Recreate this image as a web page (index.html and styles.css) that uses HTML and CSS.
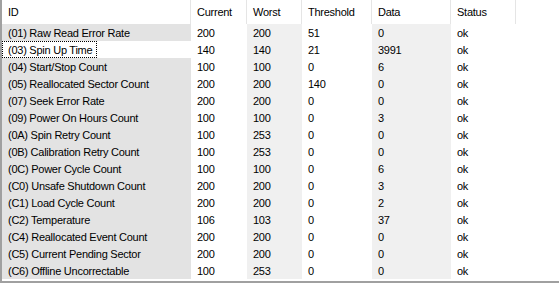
FILE: index.html
```html
<!DOCTYPE html>
<html>
<head>
<meta charset="utf-8">
<link rel="stylesheet" href="styles.css">
</head>
<body>
<div class="list">
  <div class="row head">
    <div class="c id">ID</div>
    <div class="c">Current</div>
    <div class="c">Worst</div>
    <div class="c">Threshold</div>
    <div class="c">Data</div>
    <div class="c">Status</div>
    <div class="c last"></div>
  </div>
  <div class="row"><div class="c id">(01) Raw Read Error Rate</div><div class="c">200</div><div class="c alt">200</div><div class="c">51</div><div class="c alt">0</div><div class="c">ok</div><div class="c last"></div></div>
  <div class="row sel"><div class="c id"><span class="focus">(03) Spin Up Time</span></div><div class="c">140</div><div class="c alt">140</div><div class="c">21</div><div class="c alt">3991</div><div class="c">ok</div><div class="c last"></div></div>
  <div class="row"><div class="c id">(04) Start/Stop Count</div><div class="c">100</div><div class="c alt">100</div><div class="c">0</div><div class="c alt">6</div><div class="c">ok</div><div class="c last"></div></div>
  <div class="row"><div class="c id">(05) Reallocated Sector Count</div><div class="c">200</div><div class="c alt">200</div><div class="c">140</div><div class="c alt">0</div><div class="c">ok</div><div class="c last"></div></div>
  <div class="row"><div class="c id">(07) Seek Error Rate</div><div class="c">200</div><div class="c alt">200</div><div class="c">0</div><div class="c alt">0</div><div class="c">ok</div><div class="c last"></div></div>
  <div class="row"><div class="c id">(09) Power On Hours Count</div><div class="c">100</div><div class="c alt">100</div><div class="c">0</div><div class="c alt">3</div><div class="c">ok</div><div class="c last"></div></div>
  <div class="row"><div class="c id">(0A) Spin Retry Count</div><div class="c">100</div><div class="c alt">253</div><div class="c">0</div><div class="c alt">0</div><div class="c">ok</div><div class="c last"></div></div>
  <div class="row"><div class="c id">(0B) Calibration Retry Count</div><div class="c">100</div><div class="c alt">253</div><div class="c">0</div><div class="c alt">0</div><div class="c">ok</div><div class="c last"></div></div>
  <div class="row"><div class="c id">(0C) Power Cycle Count</div><div class="c">100</div><div class="c alt">100</div><div class="c">0</div><div class="c alt">6</div><div class="c">ok</div><div class="c last"></div></div>
  <div class="row"><div class="c id">(C0) Unsafe Shutdown Count</div><div class="c">200</div><div class="c alt">200</div><div class="c">0</div><div class="c alt">3</div><div class="c">ok</div><div class="c last"></div></div>
  <div class="row"><div class="c id">(C1) Load Cycle Count</div><div class="c">200</div><div class="c alt">200</div><div class="c">0</div><div class="c alt">2</div><div class="c">ok</div><div class="c last"></div></div>
  <div class="row"><div class="c id">(C2) Temperature</div><div class="c">106</div><div class="c alt">103</div><div class="c">0</div><div class="c alt">37</div><div class="c">ok</div><div class="c last"></div></div>
  <div class="row"><div class="c id">(C4) Reallocated Event Count</div><div class="c">200</div><div class="c alt">200</div><div class="c">0</div><div class="c alt">0</div><div class="c">ok</div><div class="c last"></div></div>
  <div class="row"><div class="c id">(C5) Current Pending Sector</div><div class="c">200</div><div class="c alt">200</div><div class="c">0</div><div class="c alt">0</div><div class="c">ok</div><div class="c last"></div></div>
  <div class="row"><div class="c id">(C6) Offline Uncorrectable</div><div class="c">100</div><div class="c alt">253</div><div class="c">0</div><div class="c alt">0</div><div class="c">ok</div><div class="c last"></div></div>
</div>
</body>
</html>
```
FILE: styles.css
```css
html, body {
  margin: 0;
  padding: 0;
  background: #ffffff;
}
.list {
  width: 557px;
  height: 281px;
  border-left: 2px solid #a0a0a0;
  border-bottom: 2px solid #a0a0a0;
  font-family: "Liberation Sans", Arial, sans-serif;
  font-size: 11px;
  letter-spacing: -0.25px;
  color: #000;
  background: #fff;
}
.row {
  display: grid;
  grid-template-columns: 189px 56px 55px 70px 79px 65px 1fr;
  height: 17px;
}
.c {
  box-sizing: border-box;
  height: 17px;
  padding: 2px 0 0 6px;
  line-height: 15px;
  white-space: nowrap;
  overflow: hidden;
}
.row.head {
  height: 24px;
}
.head .c {
  height: 24px;
  padding-top: 0;
  line-height: 24px;
  border-right: 1px solid #e5e5e5;
}
.head .c.last {
  border-right: none;
}
.row .id {
  background: #e3e3e3;
}
.row.head .id {
  background: #fff;
}
.row.sel .id {
  background: #fff;
  padding: 0;
}
.alt {
  background: #f0f0f0;
}
.focus {
  display: inline-block;
  box-sizing: border-box;
  height: 17px;
  line-height: 13px;
  padding: 2px 4px 0 5px;
  border: 1px dotted #000;
}
```
